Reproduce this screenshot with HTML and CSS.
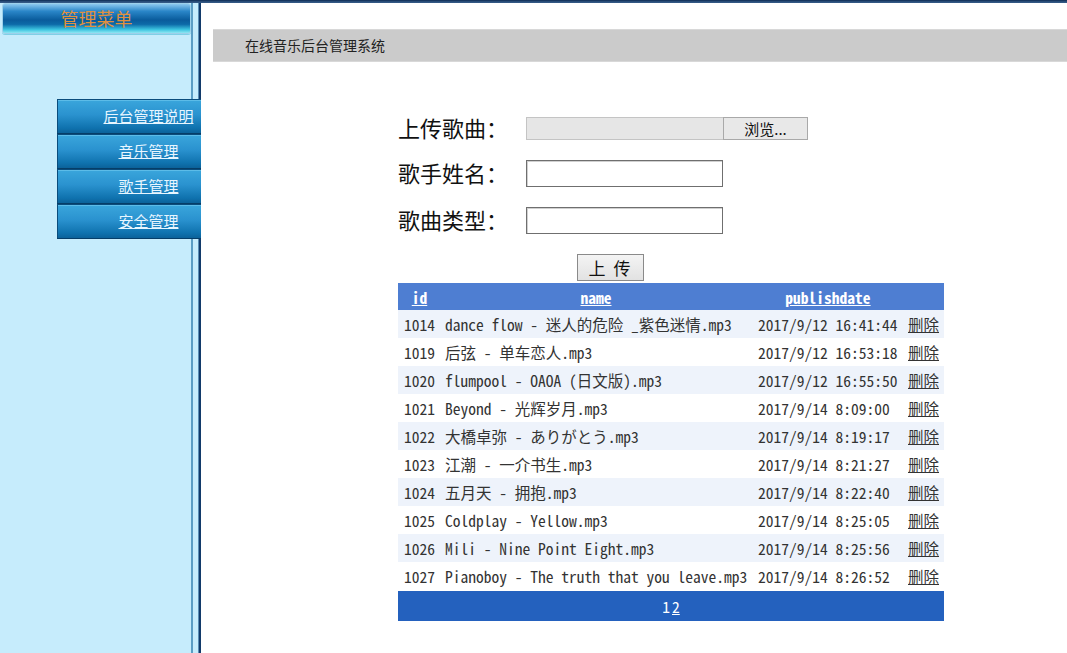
FILE: index.html
```html
<!DOCTYPE html>
<html lang="zh-CN">
<head>
<meta charset="utf-8">
<title>在线音乐后台管理系统</title>
<link rel="stylesheet" href="styles.css">
</head>
<body>
<div class="topline"></div>
<div class="frames">
  <aside class="side">
    <div class="side-head">管理菜单</div>
    <nav class="menu">
      <a class="menu-item" href="#">后台管理说明</a>
      <a class="menu-item" href="#">音乐管理</a>
      <a class="menu-item" href="#">歌手管理</a>
      <a class="menu-item" href="#">安全管理</a>
    </nav>
  </aside>
  <main class="main">
    <div class="titlebar">在线音乐后台管理系统</div>
    <form class="upload">
      <div class="row">
        <label class="lbl">上传歌曲：</label>
        <div class="file"><span class="file-box"></span><span class="file-btn">浏览...</span></div>
      </div>
      <div class="row">
        <label class="lbl">歌手姓名：</label>
        <span class="txt"></span>
      </div>
      <div class="row">
        <label class="lbl">歌曲类型：</label>
        <span class="txt"></span>
      </div>
      <div class="btn-row"><span class="up-btn">上 传</span></div>
    </form>
    <table class="grid">
      <thead>
        <tr><th class="c-id"><a href="#">id</a></th><th class="c-name"><a href="#">name</a></th><th class="c-date"><a href="#">publishdate</a></th><th class="c-del"></th></tr>
      </thead>
      <tbody>
        <tr class="odd"><td>1014</td><td>dance flow - 迷人的危险 _紫色迷情.mp3</td><td>2017/9/12 16:41:44</td><td><a href="#">删除</a></td></tr>
        <tr><td>1019</td><td>后弦 - 单车恋人.mp3</td><td>2017/9/12 16:53:18</td><td><a href="#">删除</a></td></tr>
        <tr class="odd"><td>1020</td><td>flumpool - OAOA (日文版).mp3</td><td>2017/9/12 16:55:50</td><td><a href="#">删除</a></td></tr>
        <tr><td>1021</td><td>Beyond - 光辉岁月.mp3</td><td>2017/9/14 8:09:00</td><td><a href="#">删除</a></td></tr>
        <tr class="odd"><td>1022</td><td>大橋卓弥 - ありがとう.mp3</td><td>2017/9/14 8:19:17</td><td><a href="#">删除</a></td></tr>
        <tr><td>1023</td><td>江潮 - 一介书生.mp3</td><td>2017/9/14 8:21:27</td><td><a href="#">删除</a></td></tr>
        <tr class="odd"><td>1024</td><td>五月天 - 拥抱.mp3</td><td>2017/9/14 8:22:40</td><td><a href="#">删除</a></td></tr>
        <tr><td>1025</td><td>Coldplay - Yellow.mp3</td><td>2017/9/14 8:25:05</td><td><a href="#">删除</a></td></tr>
        <tr class="odd"><td>1026</td><td>Mili - Nine Point Eight.mp3</td><td>2017/9/14 8:25:56</td><td><a href="#">删除</a></td></tr>
        <tr><td>1027</td><td>Pianoboy - The truth that you leave.mp3</td><td>2017/9/14 8:26:52</td><td><a href="#">删除</a></td></tr>
      </tbody>
      <tfoot>
        <tr><td colspan="4"><span class="pg">1</span><a class="pg" href="#">2</a></td></tr>
      </tfoot>
    </table>
  </main>
</div>
</body>
</html>
```

FILE: styles.css
```css
html, body {
  margin: 0;
  padding: 0;
  height: 100%;
  background: #fff;
  overflow: hidden;
}
body {
  font-family: "Noto Sans CJK SC", "Liberation Sans", sans-serif;
  color: #222;
}
.topline {
  height: 3px;
  background: linear-gradient(#16365f 0, #16365f 1px, #3b628f 2px, #2a4d78 3px);
}
.frames {
  display: flex;
  height: 650px;
}
.side {
  width: 201px;
  flex: none;
  overflow: hidden;
  background:
    linear-gradient(to right,
      #c6ecfc 0, #c6ecfc 191px,
      #5b9dc4 191px, #5b9dc4 193px,
      #c6ecfc 193px, #c6ecfc 198px,
      #5b8fb6 198px, #5b8fb6 199px,
      #123a6a 199px, #123a6a 201px);
}
.side-head {
  margin: 0 10px 0 2px;
  height: 29px;
  border: 1px solid #9dd0ea;
  border-radius: 3px;
  background: linear-gradient(#8cc8ee 0%, #2a86c8 25%, #0a5c9c 55%, #0d6aa8 70%, #3cc4e0 88%, #8ee6f2 100%);
  color: #df9040;
  font-size: 18px;
  line-height: 28px;
  text-align: center;
  box-shadow: 0 1px 0 #7fcfe6;
}
.menu {
  display: flex;
  flex-direction: column;
  margin-top: 65px;
  margin-left: 57px;
  width: 183px;
}
.menu-item {
  display: block;
  height: 33px;
  line-height: 32px;
  margin-bottom: 1px;
  border: 1px solid #0a4c7c;
  border-bottom-width: 0;
  box-shadow: inset 0 1px 0 #5cbce8, 0 1px 0 #063e68;
  background: linear-gradient(#3aa6dc 0%, #2a92cf 45%, #0f72ae 85%, #0b629a 100%);
  color: #e8f6ff;
  font-size: 15px;
  text-align: center;
  text-decoration: underline;
}
.main {
  flex: 1;
  min-width: 0;
  padding-top: 26px;
}
.titlebar {
  margin-left: 12px;
  height: 31px;
  border-top: 1px solid #d8d8d8;
  border-bottom: 1px solid #d8d8d8;
  background: #cbcbcb;
  padding-left: 32px;
  font-size: 14px;
  line-height: 31px;
  color: #222;
}
.upload {
  margin-left: 197px;
  margin-top: 44px;
  width: 420px;
}
.row {
  display: flex;
  align-items: center;
  height: 45px;
}
.row:nth-child(3) {
  height: 47px;
  padding-top: 2px;
  box-sizing: border-box;
}
.lbl {
  width: 128px;
  flex: none;
  font-size: 22px;
  color: #111;
  line-height: 1;
  margin-top: -4px;
}
.file {
  display: flex;
}
.file-box {
  width: 196px;
  height: 21px;
  background: #e6e6e6;
  border: 1px solid #c4c4c4;
  border-right: none;
}
.file-btn {
  width: 83px;
  height: 21px;
  border: 1px solid #a9a9a9;
  background: #e8e8e8;
  font-size: 15px;
  line-height: 21px;
  text-align: center;
  color: #111;
}
.txt {
  width: 195px;
  height: 25px;
  border: 1px solid #6f6f6f;
  box-shadow: inset 1px 1px 0 #d0d0d0;
  background: #fff;
}
.btn-row {
  padding-left: 179px;
  margin-top: 11px;
}
.up-btn {
  display: inline-block;
  width: 65px;
  height: 25px;
  border: 1px solid #8a8a8a;
  background: linear-gradient(#f4f4f4, #e2e2e2);
  font-size: 17px;
  line-height: 25px;
  text-align: center;
  color: #111;
  letter-spacing: 2px;
}
.grid {
  margin-left: 197px;
  margin-top: 2px;
  width: 546px;
  border-collapse: collapse;
  font-family: "Noto Sans Mono CJK SC", "Liberation Mono", "Noto Sans CJK SC", monospace;
  font-size: 15.5px;
  color: #333;
}
.grid th {
  height: 27px;
  padding: 0;
  background: #4e7ed2;
  text-align: center;
  font-weight: bold;
}
.grid th a {
  color: #fff;
}
.c-id { width: 43px; }
.c-name { width: 310px; }
.c-date { width: 154px; }
.grid tbody td {
  height: 28px;
  padding: 0 0 0 6px;
  white-space: nowrap;
}
.grid tbody td:nth-child(2) { padding-left: 4px; }
.grid tbody td:nth-child(3) { padding-left: 7px; }
.grid tbody td:nth-child(4) { padding-left: 3px; }
.grid tbody tr.odd td {
  background: #eef3fb;
}
.grid tbody a {
  color: #333;
}
.grid tfoot td {
  height: 30px;
  border-top: 1px solid #fff;
  background: #2461be;
  color: #fff;
  text-align: center;
  padding: 0;
}
.grid tfoot .pg {
  margin: 0 1px;
}
.grid tfoot a {
  color: #fff;
}
```
